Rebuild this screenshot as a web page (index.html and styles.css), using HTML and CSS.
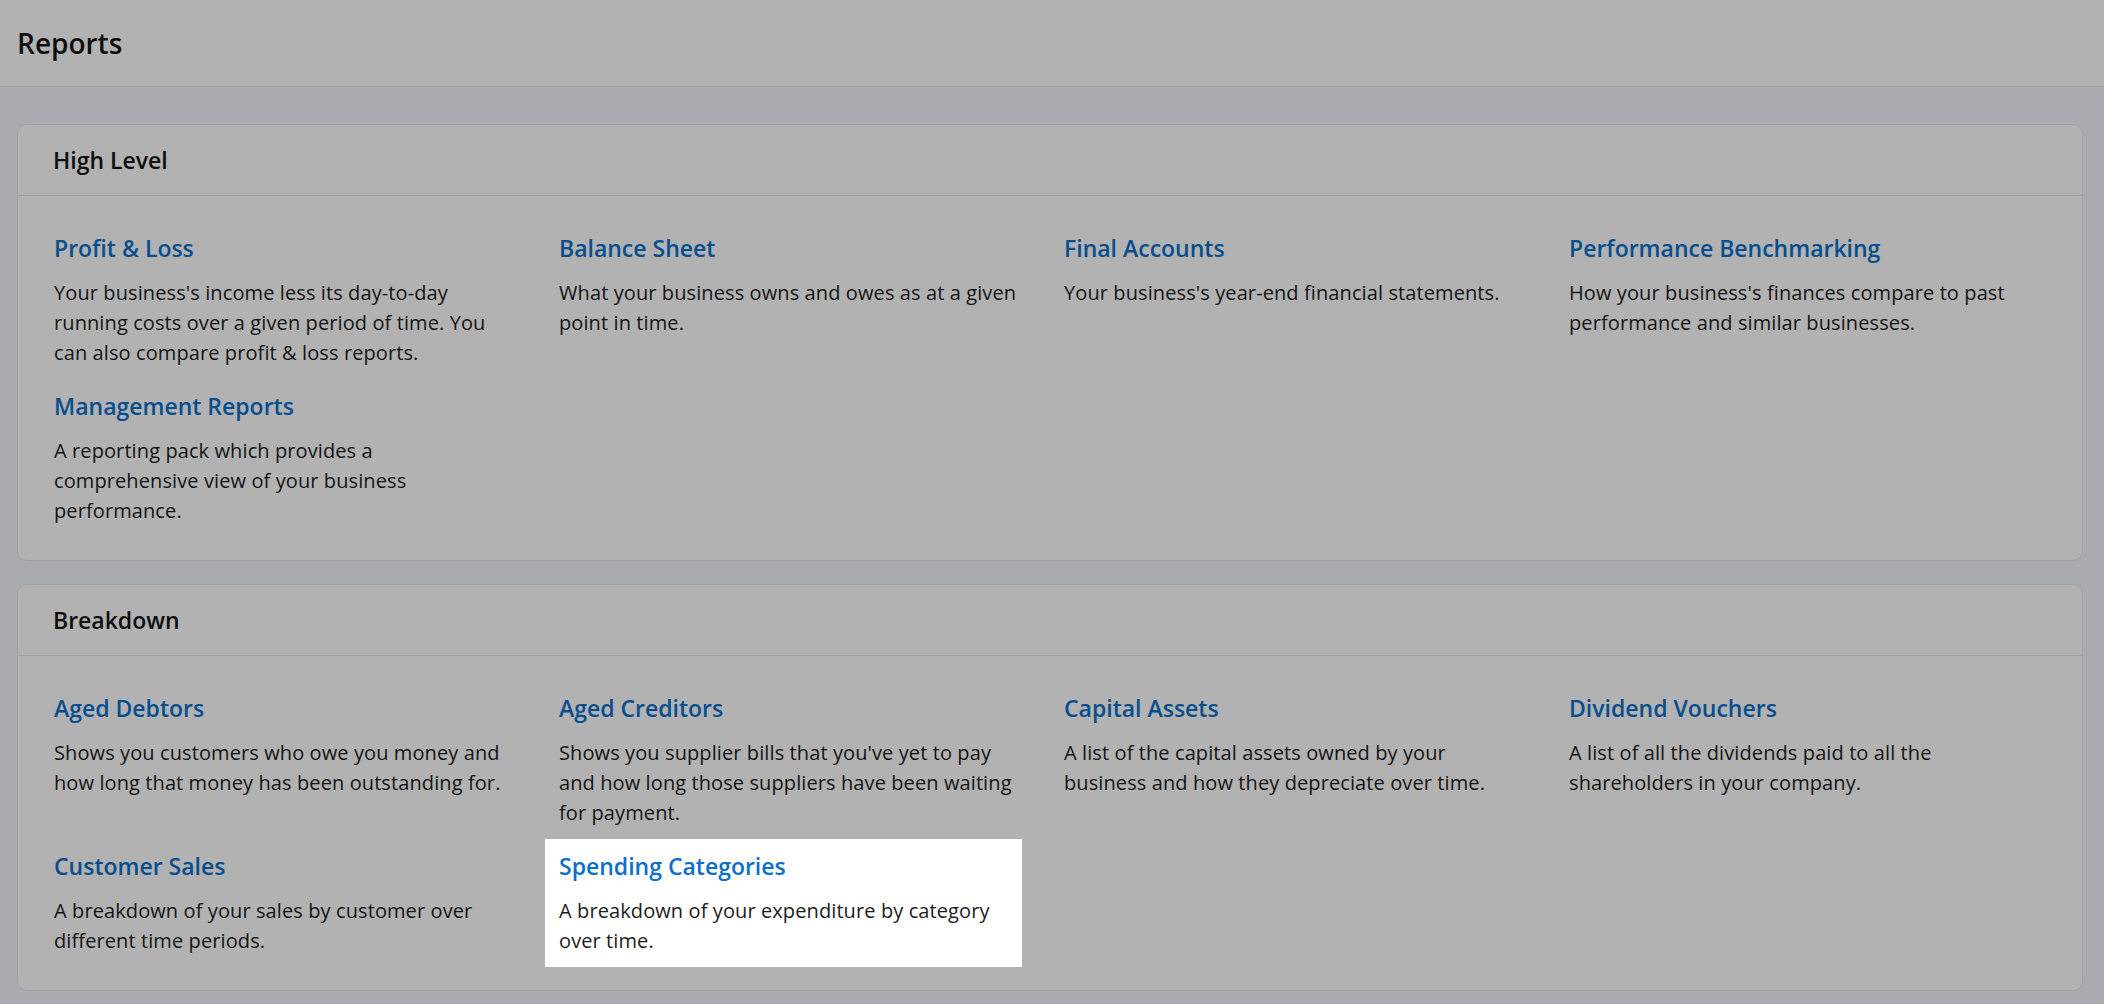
FILE: index.html
```html
<!DOCTYPE html>
<html>
	<head>
		<meta charset="UTF-8">
		<title>Reports</title>
		<link rel="stylesheet" href="styles.css">
	</head>
	<body>
		<div class="topbar">
			<h1>Reports</h1>
		</div>

		<div class="page">
			<div class="panel">
				<div class="panel-hd">High Level</div>
				<div class="panel-bd">
					<a class="report" href="#">
						<h3>Profit &amp; Loss</h3>
						<p>Your business's income less its day-to-day running costs over a given period of time. You can also compare profit &amp; loss reports.</p>
					</a>
					<a class="report" href="#">
						<h3>Balance Sheet</h3>
						<p>What your business owns and owes as at a given point in time.</p>
					</a>
					<a class="report" href="#">
						<h3>Final Accounts</h3>
						<p>Your business's year-end financial statements.</p>
					</a>
					<a class="report" href="#">
						<h3>Performance Benchmarking</h3>
						<p>How your business's finances compare to past performance and similar businesses.</p>
					</a>
					<a class="report" href="#">
						<h3>Management Reports</h3>
						<p>A reporting pack which provides a comprehensive view of your business performance.</p>
					</a>
				</div>
			</div>

			<div class="panel">
				<div class="panel-hd">Breakdown</div>
				<div class="panel-bd">
					<a class="report" href="#">
						<h3>Aged Debtors</h3>
						<p>Shows you customers who owe you money and how long that money has been outstanding for.</p>
					</a>
					<a class="report" href="#">
						<h3>Aged Creditors</h3>
						<p>Shows you supplier bills that you've yet to pay and how long those suppliers have been waiting for payment.</p>
					</a>
					<a class="report" href="#">
						<h3>Capital Assets</h3>
						<p>A list of the capital assets owned by your business and how they depreciate over time.</p>
					</a>
					<a class="report" href="#">
						<h3>Dividend Vouchers</h3>
						<p>A list of all the dividends paid to all the shareholders in your company.</p>
					</a>
					<a class="report" href="#">
						<h3>Customer Sales</h3>
						<p>A breakdown of your sales by customer over different time periods.</p>
					</a>
					<a class="report spotlight" href="#">
						<h3>Spending Categories</h3>
						<p>A breakdown of your expenditure by category over time.</p>
					</a>
				</div>
			</div>
		</div>

		<!-- tour backdrop, the spotlit report sits above it -->
		<div class="backdrop"></div>
	</body>
</html>
```

FILE: styles.css
```css
body,h1,h3,p{margin:0;padding:0;}
body{font:20px/30px "Open Sans",Lato,sans-serif;color:#1c1c1c;background:#f1f5fb;}
a{text-decoration:none;}

.topbar{height:86px;display:flex;align-items:center;padding:0 17px;background:#fff;border-bottom:1px solid #e6e9ee;}
.topbar h1{font-size:28px;font-weight:600;color:#151515;}

.page{padding:37px 21px 20px 17px;}

.panel{background:#fff;border:1px solid #e4e7ec;border-radius:10px;margin-bottom:23px;}
.panel-hd{height:70px;display:flex;align-items:center;padding:0 35px;border-bottom:1px solid #e6e8ec;font-size:23px;font-weight:600;color:#151515;}
.panel-bd{display:grid;grid-template-columns:repeat(4,477px);column-gap:28px;padding:25px 50px 23px 22px;}

.report{display:block;padding:12px 0 11px 14px;}
.report h3{font-size:23px;line-height:30px;font-weight:600;color:#0a70cc;margin-bottom:15px;}
.report p{color:#1d1d1d;letter-spacing:.1px;}

.backdrop{position:fixed;top:0;left:0;right:0;bottom:0;background:rgba(0,0,0,.3);z-index:1;}
.spotlight{position:relative;z-index:2;background:#fff;}
```
